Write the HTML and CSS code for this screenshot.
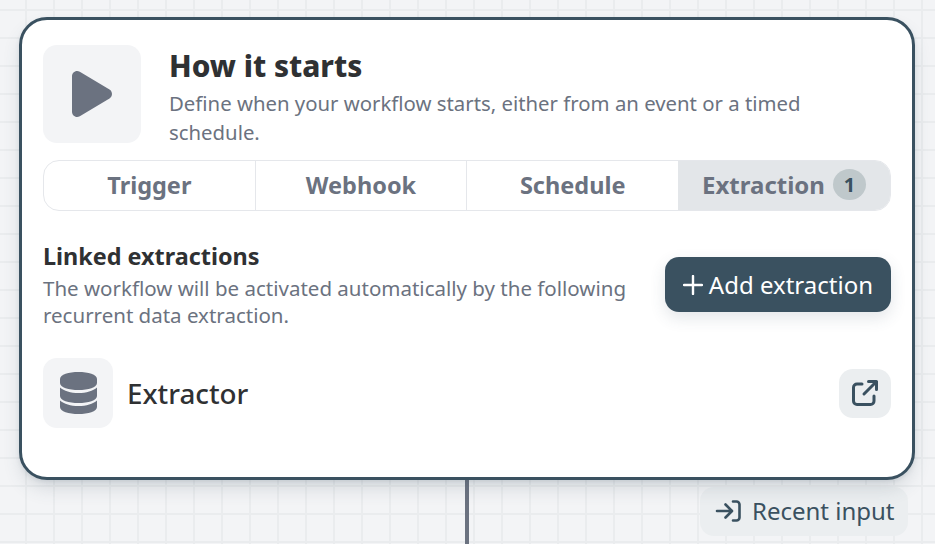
FILE: index.html
```html
<!DOCTYPE html>
<html lang="en">
  <head>
    <meta charset="UTF-8" />
    <meta name="viewport" content="width=device-width, initial-scale=1.0" />
    <title>How it starts</title>
    <link rel="stylesheet" href="styles.css">
  </head>
  <body>
    <div class="connector"></div>
    <div class="card">
      <div class="header">
        <div class="header-icon">
          <svg width="42" height="48" viewBox="0 0 42 48">
            <path d="M1 6.5C1 2.2 5.2 -0.4 8.8 1.8L38.5 19.6C41.8 21.6 41.8 26.4 38.5 28.4L8.8 46.2C5.2 48.4 1 45.800 1 41.500Z" fill="#6b7280" />
          </svg>
        </div>
        <div class="header-text">
          <h1>How it starts</h1>
          <p>Define when your workflow starts, either from an event or a timed schedule.</p>
        </div>
      </div>
      <div class="tabs">
        <div class="tab">Trigger</div>
        <div class="tab">Webhook</div>
        <div class="tab">Schedule</div>
        <div class="tab active">Extraction <span class="count">1</span></div>
      </div>
      <div class="linked">
        <div class="linked-text">
          <h2>Linked extractions</h2>
          <p>The workflow will be activated automatically by the following recurrent data extraction.</p>
        </div>
        <button type="button" class="add-button">
          <svg width="20" height="20" viewBox="0 0 20 20">
            <path d="M10 1V19M1 10H19" stroke="#ffffff" stroke-width="2.4" stroke-linecap="round" />
          </svg>
          Add extraction
        </button>
      </div>
      <div class="item">
        <div class="item-icon">
          <svg width="37" height="42" viewBox="0 0 38 42" preserveAspectRatio="none">
            <path d="M0 7C0 2.500 9 0 19 0S38 2.500 38 7V11C38 15.500 29 18 19 18S0 15.500 0 11Z" fill="#6b7280" />
            <path d="M0 15.500C4 19 11 21 19 21S34 19 38 15.500V24C38 28.500 29 31 19 31S0 28.500 0 24Z" fill="#6b7280" />
            <path d="M0 28.500C4 32 11 34 19 34S34 32 38 28.500V35C38 39.500 29 42 19 42S0 39.500 0 35Z" fill="#6b7280" />
          </svg>
        </div>
        <span class="item-name">Extractor</span>
        <button type="button" class="open-button">
          <svg width="28" height="28" viewBox="0 0 28 28" fill="none" stroke="#3a5160" stroke-width="3" stroke-linecap="round" stroke-linejoin="round">
            <path d="M11 5H6A3.500 3.500 0 0 0 2.500 8.500V22A3.500 3.500 0 0 0 6 25.500H19.500A3.500 3.500 0 0 0 23 22V17" />
            <path d="M13 15L25.500 2.500M17.500 2.500H25.500V10.500" />
          </svg>
        </button>
      </div>
    </div>
    <div class="footer">
      <div class="recent">
        <svg width="26" height="22" viewBox="0 0 26 22" fill="none" stroke="#3a5160" stroke-width="2.600" stroke-linecap="round" stroke-linejoin="round">
          <path d="M2 11H16M10.500 4.500L17 11L10.500 17.500" />
          <path d="M18 1.500H21.500A3 3 0 0 1 24.500 4.500V17.500A3 3 0 0 1 21.500 20.500H18" />
        </svg>
        Recent input
      </div>
    </div>
  </body>
</html>
```

FILE: styles.css
```css
html,
body {
  height: 100%;
}

body {
  font-family: "Noto Sans", sans-serif;
  margin: 0;
  box-sizing: border-box;
  height: 544px;
  overflow: hidden;
  padding: 17px 27px 0 19px;
  position: relative;
  background-color: #f3f4f6;
  background-image:
    linear-gradient(to right, #eaecee 2px, transparent 2px),
    linear-gradient(to bottom, #eaecee 2px, transparent 2px);
  background-size: 28px 28px;
  background-position: 25px 9px;
}

.connector {
  position: absolute;
  left: 465px;
  top: 470px;
  width: 4px;
  height: 74px;
  background-color: #6b7280;
}

.card {
  position: relative;
  box-sizing: border-box;
  width: 896px;
  margin-right: -7px;
  height: 463px;
  padding: 25px 21px 0;
  background-color: #ffffff;
  border: 3px solid #3a5160;
  border-radius: 28px;
  box-shadow: 0 10px 20px -4px rgba(58, 81, 96, 0.2), 0 2px 4px rgba(58, 81, 96, 0.1);
}

.header {
  display: flex;
  gap: 28px;
  height: 98px;
}

.header-icon {
  flex: none;
  width: 98px;
  height: 98px;
  border-radius: 14px;
  background-color: #f3f4f6;
  display: flex;
  align-items: center;
  justify-content: center;
}

.header-text {
  width: 650px;
}

h1 {
  margin: 0;
  font-size: 29.7px;
  line-height: 42px;
  font-weight: 800;
  color: #2f3133;
}

.header-text p {
  margin: 2px 0 0;
  font-size: 20.35px;
  line-height: 29px;
  color: #6b7280;
}

.tabs {
  display: flex;
  height: 51px;
  margin-top: 17px;
  box-sizing: border-box;
  border: 1px solid #e5e7eb;
  border-radius: 16px;
  overflow: hidden;
}

.tab {
  flex: 1;
  display: flex;
  align-items: center;
  justify-content: center;
  gap: 8px;
  padding-bottom: 2px;
  font-size: 23.5px;
  font-weight: 700;
  color: #6b7280;
  border-left: 1px solid #e5e7eb;
}

.tab:first-child {
  border-left: none;
}

.tab.active {
  flex: none;
  width: 212px;
  font-size: 24px;
  background-color: #e3e6e9;
  border-left: none;
}

.count {
  width: 33px;
  height: 31px;
  border-radius: 50%;
  background-color: #bfc8cb;
  color: #3a5160;
  font-size: 20px;
  display: flex;
  align-items: center;
  justify-content: center;
}

.linked {
  display: flex;
  justify-content: space-between;
  align-items: center;
  margin-top: 29px;
}

.linked-text {
  width: 600px;
}

h2 {
  margin: 0;
  font-size: 23.4px;
  line-height: 32px;
  font-weight: 700;
  color: #2f3133;
}

.linked-text p {
  margin: 3px 0 0;
  font-size: 20.5px;
  line-height: 27px;
  color: #6b7280;
}

.add-button {
  display: flex;
  align-items: center;
  gap: 6px;
  height: 55px;
  padding: 0 18px;
  border: none;
  border-radius: 14px;
  background-color: #3a5160;
  color: #ffffff;
  font-family: inherit;
  font-size: 24px;
  line-height: 30px;
  box-shadow: 0 6px 16px rgba(58, 81, 96, 0.14);
}

.item {
  display: flex;
  align-items: center;
  margin-top: 29px;
}

.item-icon {
  flex: none;
  width: 70px;
  height: 70px;
  border-radius: 14px;
  background-color: #f3f4f6;
  display: flex;
  align-items: center;
  justify-content: center;
}

.item-name {
  flex: 1;
  margin-left: 14px;
  font-size: 27.8px;
  font-weight: 500;
  color: #2f3133;
}

.open-button {
  width: 52px;
  height: 49px;
  padding: 0;
  border: none;
  border-radius: 14px;
  background-color: #ebeef0;
  display: flex;
  align-items: center;
  justify-content: center;
}

.footer {
  display: flex;
  justify-content: flex-end;
  margin-top: 7px;
}

.recent {
  display: flex;
  align-items: center;
  gap: 11px;
  height: 49px;
  width: 208px;
  box-sizing: border-box;
  padding-left: 15px;
  padding-bottom: 2px;
  border-radius: 14px;
  background-color: #ebeef0;
  color: #3a5160;
  font-size: 24px;
  white-space: nowrap;
}
```
